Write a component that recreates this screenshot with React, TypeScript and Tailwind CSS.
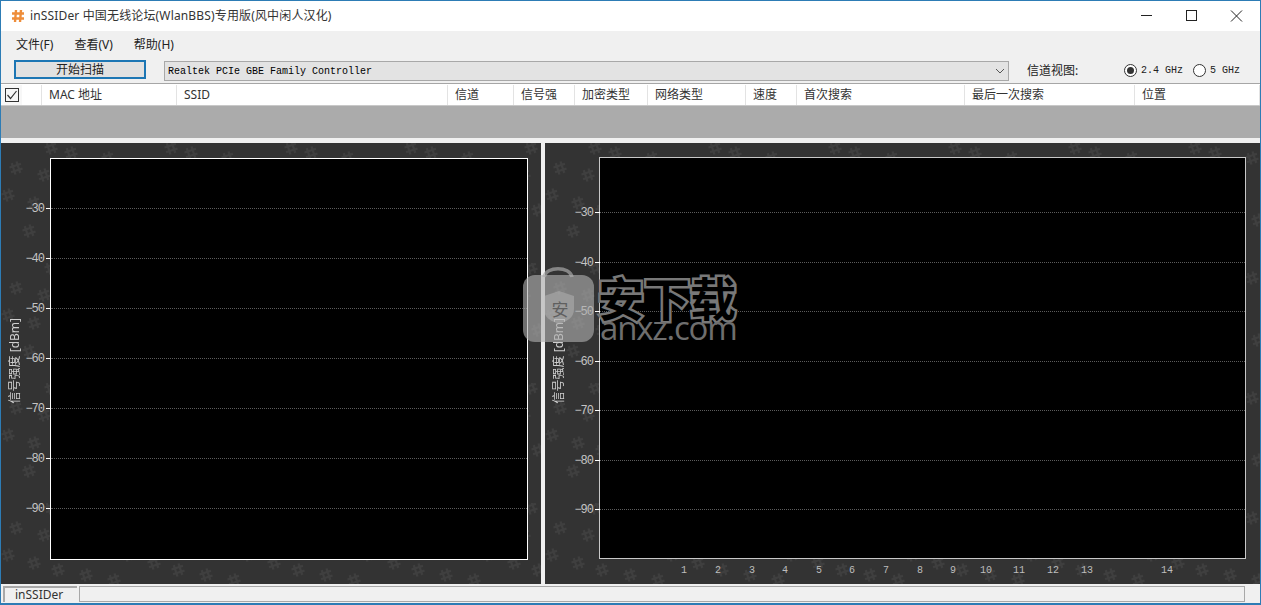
import React from "react";

const cjk = "font-['Noto_Sans','Noto_Sans_CJK_SC',sans-serif]";
const bitmap = "font-['Liberation_Mono','Noto_Sans_CJK_SC',monospace]";

const columns = [
  { label: "MAC 地址", width: "w-[135px]" },
  { label: "SSID", width: "w-[271px]" },
  { label: "信道", width: "w-[66px]" },
  { label: "信号强", width: "w-[61px]" },
  { label: "加密类型", width: "w-[73px]" },
  { label: "网络类型", width: "w-[98px]" },
  { label: "速度", width: "w-[51px]" },
  { label: "首次搜索", width: "w-[168px]" },
  { label: "最后一次搜索", width: "w-[170px]" },
  { label: "位置", width: "flex-1" },
];

const levels = [-30, -40, -50, -60, -70, -80, -90];

const channels = [
  { n: 1, x: 84 },
  { n: 2, x: 118 },
  { n: 3, x: 152 },
  { n: 4, x: 185 },
  { n: 5, x: 219 },
  { n: 6, x: 252 },
  { n: 7, x: 286 },
  { n: 8, x: 320 },
  { n: 9, x: 353 },
  { n: 10, x: 386 },
  { n: 11, x: 419 },
  { n: 12, x: 453 },
  { n: 13, x: 487 },
  { n: 14, x: 567 },
];

const marks = [
  [15, 25], [43, 32], [7, 52], [28, 88], [50, 5], [70, 10], [107, 15],
  [57, 67], [85, 72], [113, 77], [33, 60], [92, 108],
];

function HashMark({ x, y, color }: { x: number; y: number; color: string }) {
  return (
    <g transform={`translate(${x} ${y}) rotate(-18)`} stroke={color} strokeWidth="2.2" fill="none">
      <path d="M-2.5 -6V6M2.5 -6V6M-6 -2.5H6M-6 2.5H6" />
    </g>
  );
}

function Speckle({ id }: { id: string }) {
  return (
    <svg className="absolute inset-0 h-full w-full blur-[0.6px]" aria-hidden="true">
      <defs>
        <pattern id={id} width="120" height="120" patternUnits="userSpaceOnUse">
          {marks.map(([x, y], i) => (
            <HashMark key={i} x={x} y={y} color="#3f3f3f" />
          ))}
        </pattern>
      </defs>
      <rect width="100%" height="100%" fill={`url(#${id})`} />
    </svg>
  );
}

function GraphPanel({
  id,
  className,
  plotBorder,
  first,
  step,
  labelClass,
  showChannels,
}: {
  id: string;
  className: string;
  plotBorder: string;
  first: number;
  step: number;
  labelClass: string;
  showChannels?: boolean;
}) {
  return (
    <div className={`relative flex bg-[#333333] ${className}`}>
      <Speckle id={id} />
      <div className={`relative flex-1 bg-black border ${plotBorder}`}>
        {levels.map((level, i) => (
          <div key={level} className="absolute left-0 right-0" style={{ top: first + i * step - 1 }}>
            <div className="border-t border-dotted border-[#5c5c5c]" />
            <div className="absolute right-full top-0 h-px w-[5px] bg-white" />
            <span className={`absolute right-full top-[-6px] mr-[7px] text-[12px] leading-[14px] tracking-[-1px] text-[#c4c4c4] ${bitmap}`}>
              −{Math.abs(level)}
            </span>
          </div>
        ))}
        <span
          className={`absolute [writing-mode:vertical-rl] [text-orientation:sideways] rotate-180 whitespace-nowrap text-[12px] leading-[14px] text-[#cfcfcf] ${cjk} ${labelClass}`}
        >
          信号强度 [dBm]
        </span>
        {showChannels &&
          channels.map((c) => (
            <span
              key={c.n}
              className={`absolute top-full mt-[6px] -translate-x-1/2 text-[10px] leading-[14px] text-[#bdbdbd] ${bitmap}`}
              style={{ left: c.x }}
            >
              {c.n}
            </span>
          ))}
      </div>
    </div>
  );
}

function Radio({ checked, label }: { checked?: boolean; label: string }) {
  return (
    <div className="flex items-center gap-[4px]">
      <span className="flex h-[13px] w-[13px] items-center justify-center rounded-full border border-[#333333] bg-white">
        {checked && <span className="h-[7px] w-[7px] rounded-full bg-[#333333]" />}
      </span>
      <span className={`text-[10px] text-[#222222] ${bitmap}`}>{label}</span>
    </div>
  );
}

export default function App() {
  return (
    <div className={`relative flex h-[605px] w-[1261px] flex-col overflow-hidden border border-b-2 border-[#2d7cb5] bg-[#f0f0f0] ${cjk}`}>
      {/* Title bar */}
      <div className="flex h-[30px] items-center bg-white text-[12px] text-[#333333]">
        <svg className="ml-[10px] h-[14px] w-[14px]" viewBox="0 0 14 14" fill="none" stroke="#ee8d3a" strokeWidth="2.4">
          <path d="M5 1L4 13M10 1L9 13M1 4.5H13M1 9.5H13" />
        </svg>
        <span className="ml-[5px] tracking-[0.15px]">inSSIDer 中国无线论坛(WlanBBS)专用版(风中闲人汉化)</span>
        <div className="ml-auto flex items-center">
          <svg className="h-[30px] w-[45px]" viewBox="0 0 45 30" fill="none" stroke="#222222">
            <path d="M17 14.5H28" />
          </svg>
          <svg className="h-[30px] w-[45px]" viewBox="0 0 45 30" fill="none" stroke="#222222">
            <rect x="17.5" y="9.5" width="10" height="10" />
          </svg>
          <svg className="mr-[1px] h-[30px] w-[45px]" viewBox="0 0 45 30" fill="none" stroke="#222222">
            <path d="M17 9.5L28 20.5M28 9.5L17 20.5" />
          </svg>
        </div>
      </div>

      {/* Menu */}
      <div className="flex h-[27px] items-center gap-[21px] pl-[15px] text-[12px] text-[#222222]">
        <span>文件(F)</span>
        <span>查看(V)</span>
        <span>帮助(H)</span>
      </div>

      {/* Toolbar */}
      <div className="flex h-[25px] items-start pt-[2px] pl-[13px] text-[12px] text-[#222222]">
        <button className={`h-[19px] w-[132px] border-2 border-[#1c76b4] bg-[#e1e1e1] text-[12px] leading-[13px] ${cjk}`}>
          开始扫描
        </button>
        <div className="ml-[18px] mt-[1px] flex h-[20px] w-[845px] items-center justify-between border border-[#a8a8a8] bg-[#e3e3e3] pl-[3px] pr-[3px]">
          <span className={`text-[10px] text-black ${bitmap}`}>Realtek PCIe GBE Family Controller</span>
          <svg className="h-[10px] w-[10px]" viewBox="0 0 10 10" fill="none" stroke="#555555">
            <path d="M1 3L5 7L9 3" />
          </svg>
        </div>
        <span className="ml-[18px] mt-[2px] w-[97px]">信道视图:</span>
        <div className="mt-[3px] flex gap-[10px]">
          <Radio checked label="2.4 GHz" />
          <Radio label="5 GHz" />
        </div>
      </div>

      {/* List header */}
      <div className="flex h-[22px] border-t border-[#a6a6a6] bg-white pt-[1px] text-[12px] text-[#333333]">
        <div className="flex w-[41px] border-r border-[#e3e3e3]">
          <div className="flex w-[21px] items-center justify-center bg-[#f7f7f7]">
            <svg className="h-[14px] w-[14px]" viewBox="0 0 14 14" fill="none" stroke="#333333">
              <rect x="0.5" y="0.5" width="13" height="13" />
              <path d="M2.5 7L5.5 10.5L11.5 3" strokeWidth="1.2" />
            </svg>
          </div>
        </div>
        {columns.map((c) => (
          <div key={c.label} className={`flex items-center border-r border-[#e3e3e3] pl-[7px] ${c.width}`}>
            {c.label}
          </div>
        ))}
      </div>

      {/* Empty list area */}
      <div className="h-[33px] border-t border-[#c8c8c8] bg-[#ababab]" />
      <div className="h-[5px] bg-[#f0f0f0]" />

      {/* Graphs */}
      <div className="flex h-[441px] gap-[4px]">
        <GraphPanel
          id="speckle-left"
          className="w-[540px] pt-[15px] pl-[49px] pr-[13px] pb-[24px]"
          plotBorder="border-white"
          first={50}
          step={50}
          labelClass="left-[-43px] top-[159px]"
        />
        <GraphPanel
          id="speckle-right"
          className="flex-1 pt-[14px] pl-[54px] pr-[14px] pb-[25px]"
          plotBorder="border-[#c8c8c8]"
          first={55}
          step={49.5}
          labelClass="left-[-48px] top-[160px]"
          showChannels
        />
      </div>

      {/* Status bar */}
      <div className="flex h-[19px] gap-[2px] pt-[2px] pl-[2px] pr-[15px] text-[12px] text-[#333333]">
        <div className="flex h-[16px] w-[74px] items-center border-l-2 border-t-2 border-[#a8a8a8] pl-[10px]">
          inSSIDer
        </div>
        <div className="h-[16px] flex-1 border border-[#a8a8a8]" />
      </div>

      {/* Watermark */}
      <div className="pointer-events-none absolute left-[521px] top-[261px] flex items-start">
        <svg className="h-[81px] w-[72px]" viewBox="0 0 72 81">
          <path d="M22 15C24 4 48 4 50 15" fill="none" stroke="#a8a8a8" strokeOpacity="0.7" strokeWidth="3.5" />
          <rect x="1" y="13" width="71" height="67" rx="12" fill="#afafaf" fillOpacity="0.63" />
          <path d="M37 29L52 34V47C52 56 45 59 37 62C29 59 22 56 22 47V34Z" fill="#c4c4c4" fillOpacity="0.4" />
          <text x="38" y="54" textAnchor="middle" fontSize="17" fill="#5f5f5f" fontFamily="'Noto Sans CJK SC', sans-serif">
            安
          </text>
        </svg>
        <div className="ml-[4px] mt-[14px] flex flex-col items-start">
          <span className="text-[46px] leading-[40px] font-bold whitespace-nowrap text-black [-webkit-text-stroke:5px_#787878] [paint-order:stroke_fill] font-['Noto_Sans_CJK_SC',sans-serif]">
            安下载
          </span>
          <span className="mt-[-1px] ml-[2px] text-[33px] leading-[26px] tracking-[-1.2px] text-[#6e6e6e] font-['Open_Sans',sans-serif]">
            anxz.com
          </span>
        </div>
      </div>
    </div>
  );
}
